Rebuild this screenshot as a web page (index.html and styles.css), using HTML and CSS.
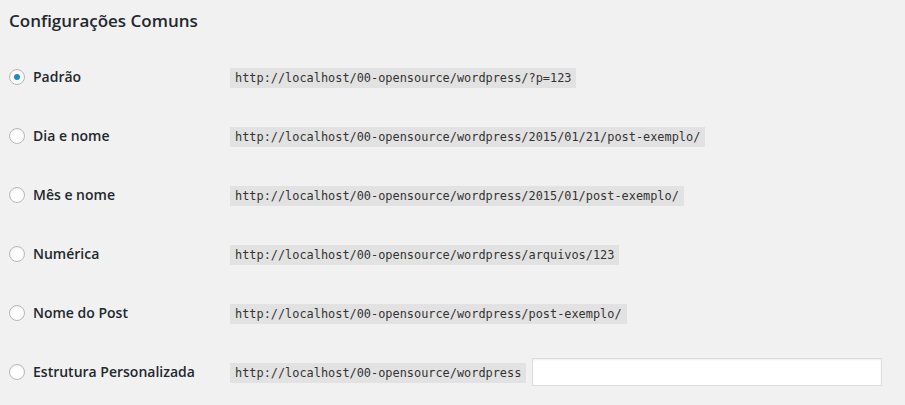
FILE: index.html
```html
<!DOCTYPE html>
<html lang="pt-BR">
<head>
<meta charset="utf-8">
<title>Configurações Comuns</title>
<link rel="stylesheet" href="styles.css">
</head>
<body>
<div class="wrap">
  <h2 class="title">Configurações Comuns</h2>
  <div class="rows">
    <div class="row">
      <label class="opt"><input type="radio" name="p" class="radio" checked><span>Padrão</span></label>
      <div class="val"><code>http://localhost/00-opensource/wordpress/?p=123</code></div>
    </div>
    <div class="row">
      <label class="opt"><input type="radio" name="p" class="radio"><span>Dia e nome</span></label>
      <div class="val"><code>http://localhost/00-opensource/wordpress/2015/01/21/post-exemplo/</code></div>
    </div>
    <div class="row">
      <label class="opt"><input type="radio" name="p" class="radio"><span>Mês e nome</span></label>
      <div class="val"><code>http://localhost/00-opensource/wordpress/2015/01/post-exemplo/</code></div>
    </div>
    <div class="row">
      <label class="opt"><input type="radio" name="p" class="radio"><span>Numérica</span></label>
      <div class="val"><code>http://localhost/00-opensource/wordpress/arquivos/123</code></div>
    </div>
    <div class="row">
      <label class="opt"><input type="radio" name="p" class="radio"><span>Nome do Post</span></label>
      <div class="val"><code>http://localhost/00-opensource/wordpress/post-exemplo/</code></div>
    </div>
    <div class="row">
      <label class="opt"><input type="radio" name="p" class="radio"><span>Estrutura Personalizada</span></label>
      <div class="val"><code>http://localhost/00-opensource/wordpress</code><input type="text" class="text"></div>
    </div>
  </div>
</div>
</body>
</html>
```
FILE: styles.css
```css
html, body {
  margin: 0;
  padding: 0;
  background: #f1f1f1;
}
body {
  font-family: "Open Sans", "Liberation Sans", sans-serif;
  color: #23282d;
  font-size: 13px;
}
.wrap {
  padding: 0 0 0 9px;
}
.title {
  margin: 0;
  padding-top: 9px;
  height: 47px;
  box-sizing: border-box;
  font-size: 17px;
  line-height: 24px;
  font-weight: 600;
}
.rows {
  display: flex;
  flex-direction: column;
}
.row {
  display: flex;
  align-items: center;
  height: 59px;
}
.opt {
  width: 221px;
  display: flex;
  align-items: center;
  gap: 8px;
  font-size: 14px;
  font-weight: 600;
}
.radio {
  appearance: none;
  -webkit-appearance: none;
  margin: 0;
  width: 16px;
  height: 16px;
  border: 1px solid #b4b9be;
  border-radius: 50%;
  background: #fff;
  box-shadow: inset 0 1px 2px rgba(0,0,0,0.07);
  box-sizing: border-box;
  display: flex;
  align-items: center;
  justify-content: center;
}
.radio:checked::before {
  content: "";
  width: 6px;
  height: 6px;
  border-radius: 50%;
  background: #1e8cbe;
}
.val {
  display: flex;
  align-items: center;
  gap: 6px;
  padding-top: 2px;
}
code {
  font-family: "DejaVu Sans Mono", "Liberation Mono", monospace;
  font-size: 11.9px;
  line-height: 15px;
  padding: 3px 5px 2px;
  background: #e2e2e2;
  color: #333;
}
.text {
  width: 350px;
  height: 28px;
  box-sizing: border-box;
  border: 1px solid #ddd;
  box-shadow: inset 0 1px 2px rgba(0,0,0,0.07);
  background: #fff;
  margin: -2px 0 0;
  padding: 3px 5px;
}
```
